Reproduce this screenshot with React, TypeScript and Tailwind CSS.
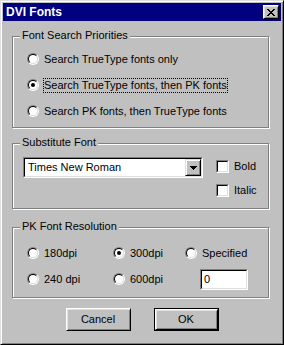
import React from 'react';

const font = { fontFamily: '"Liberation Sans", Arial, sans-serif' };

function Radio({ checked }: { checked?: boolean }) {
    return (
        <span className="relative block w-[12px] h-[12px] shrink-0 rounded-full border border-t-[#808080] border-l-[#808080] border-r-white border-b-white">
            <span className="absolute inset-0 rounded-full border border-t-black border-l-black border-r-[#dfdfdf] border-b-[#dfdfdf] bg-white flex items-center justify-center">
                {checked && <span className="block w-[4px] h-[4px] rounded-full bg-black" />}
            </span>
        </span>
    );
}

function RadioItem({ label, checked, focused }: { label: string; checked?: boolean; focused?: boolean }) {
    return (
        <div className="flex items-center">
            <Radio checked={checked} />
            <span
                className={
                    'ml-[4px] leading-[13px] border border-dotted px-0 ' +
                    (focused ? 'border-black' : 'border-transparent')
                }
            >
                {label}
            </span>
        </div>
    );
}

function Checkbox({ label }: { label: string }) {
    return (
        <div className="flex items-center h-[13px]">
            <span className="block w-[13px] h-[13px] shrink-0 border border-t-[#808080] border-l-[#808080] border-r-white border-b-white">
                <span className="block w-full h-full bg-white border border-t-black border-l-black border-r-[#dfdfdf] border-b-[#dfdfdf]" />
            </span>
            <span className="ml-[5px] leading-[13px]">{label}</span>
        </div>
    );
}

function GroupBox({ title, className, children }: { title: string; className: string; children: React.ReactNode }) {
    return (
        <div
            className={
                'relative ml-[9px] w-[257px] border border-[#808080] shadow-[1px_1px_0_#fff,inset_1px_1px_0_#fff] ' +
                className
            }
        >
            <span className="absolute left-[7px] top-[-8px] px-[2px] bg-[#c0c0c0] leading-[13px]">{title}</span>
            {children}
        </div>
    );
}

function Button({ label, isDefault }: { label: string; isDefault?: boolean }) {
    const inner = (
        <div className="w-full h-full flex items-center justify-center bg-[#c0c0c0] border border-t-white border-l-white border-r-black border-b-black shadow-[inset_1px_1px_0_#dfdfdf,inset_-1px_-1px_0_#808080]">
            <span className="leading-[13px]">{label}</span>
        </div>
    );
    if (isDefault) {
        return <div className="w-[65px] h-[23px] border border-black">{inner}</div>;
    }
    return <div className="w-[65px] h-[23px]">{inner}</div>;
}

export default function App() {
    return (
        <div
            className="w-[284px] h-[345px] bg-[#c0c0c0] border border-t-[#dfdfdf] border-l-[#dfdfdf] border-r-black border-b-black shadow-[inset_1px_1px_0_#fff,inset_-1px_-1px_0_#808080] p-[2px] text-[11px] text-black"
            style={font}
        >
            {/* Title bar */}
            <div className="h-[18px] bg-[#000080] flex items-center justify-between pl-[3px] pr-[2px]">
                <span className="text-white font-bold text-[12px] leading-[14px]">DVI Fonts</span>
                <div className="w-[16px] h-[14px] bg-[#c0c0c0] border border-t-white border-l-white border-r-black border-b-black shadow-[inset_1px_1px_0_#dfdfdf,inset_-1px_-1px_0_#808080] flex items-center justify-center">
                    <svg width="8" height="7" viewBox="0 0 8 7" shapeRendering="crispEdges">
                        <path d="M0 0h2v1H0zM6 0h2v1H6zM1 1h2v1H1zM5 1h2v1H5zM2 2h4v1H2zM3 3h2v1H3zM2 4h4v1H2zM1 5h2v1H1zM5 5h2v1H5zM0 6h2v1H0zM6 6h2v1H6z" fill="#000" />
                    </svg>
                </div>
            </div>

            {/* Font Search Priorities */}
            <GroupBox title="Font Search Priorities" className="mt-[15px] h-[92px] pl-[14px] pt-[9px]">
                <div className="flex flex-col">
                    <div className="h-[26px] flex items-center">
                        <RadioItem label="Search TrueType fonts only" />
                    </div>
                    <div className="h-[26px] flex items-center">
                        <RadioItem label="Search TrueType fonts, then PK fonts" checked focused />
                    </div>
                    <div className="h-[26px] flex items-center">
                        <RadioItem label="Search PK fonts, then TrueType fonts" />
                    </div>
                </div>
            </GroupBox>

            {/* Substitute Font */}
            <GroupBox title="Substitute Font" className="mt-[15px] h-[66px] pl-[10px] pt-[13px]">
                <div className="flex items-start">
                    <div className="w-[180px] h-[21px] border border-t-[#808080] border-l-[#808080] border-r-white border-b-white">
                        <div className="w-full h-full bg-white border border-t-black border-l-black border-r-[#dfdfdf] border-b-[#dfdfdf] flex items-center justify-between">
                            <span className="pl-[3px] leading-[13px]">Times New Roman</span>
                            <div className="w-[16px] h-[17px] bg-[#c0c0c0] border border-t-[#dfdfdf] border-l-[#dfdfdf] border-r-black border-b-black shadow-[inset_1px_1px_0_#fff,inset_-1px_-1px_0_#808080] flex items-center justify-center">
                                <svg width="7" height="4" viewBox="0 0 7 4" shapeRendering="crispEdges">
                                    <path d="M0 0h7v1H0zM1 1h5v1H1zM2 2h3v1H2zM3 3h1v1H3z" fill="#000" />
                                </svg>
                            </div>
                        </div>
                    </div>
                    <div className="ml-[13px] mt-[3px] flex flex-col gap-[11px]">
                        <Checkbox label="Bold" />
                        <Checkbox label="Italic" />
                    </div>
                </div>
            </GroupBox>

            {/* PK Font Resolution */}
            <GroupBox title="PK Font Resolution" className="mt-[18px] h-[71px] pl-[14px] pt-[12px]">
                <div className="grid grid-cols-[86px_72px_1fr] grid-rows-[26px_26px] items-center">
                    <RadioItem label="180dpi" />
                    <RadioItem label="300dpi" checked />
                    <RadioItem label="Specified" />
                    <RadioItem label="240 dpi" />
                    <RadioItem label="600dpi" />
                    <div className="ml-[15px] w-[48px] h-[21px] border border-t-[#808080] border-l-[#808080] border-r-white border-b-white">
                        <div className="w-full h-full bg-white border border-t-black border-l-black border-r-[#dfdfdf] border-b-[#dfdfdf] flex items-center">
                            <span className="pl-[2px] leading-[13px]">0</span>
                        </div>
                    </div>
                </div>
            </GroupBox>

            {/* Buttons */}
            <div className="mt-[10px] flex justify-center gap-[23px]">
                <Button label="Cancel" />
                <Button label="OK" isDefault />
            </div>
        </div>
    );
}
